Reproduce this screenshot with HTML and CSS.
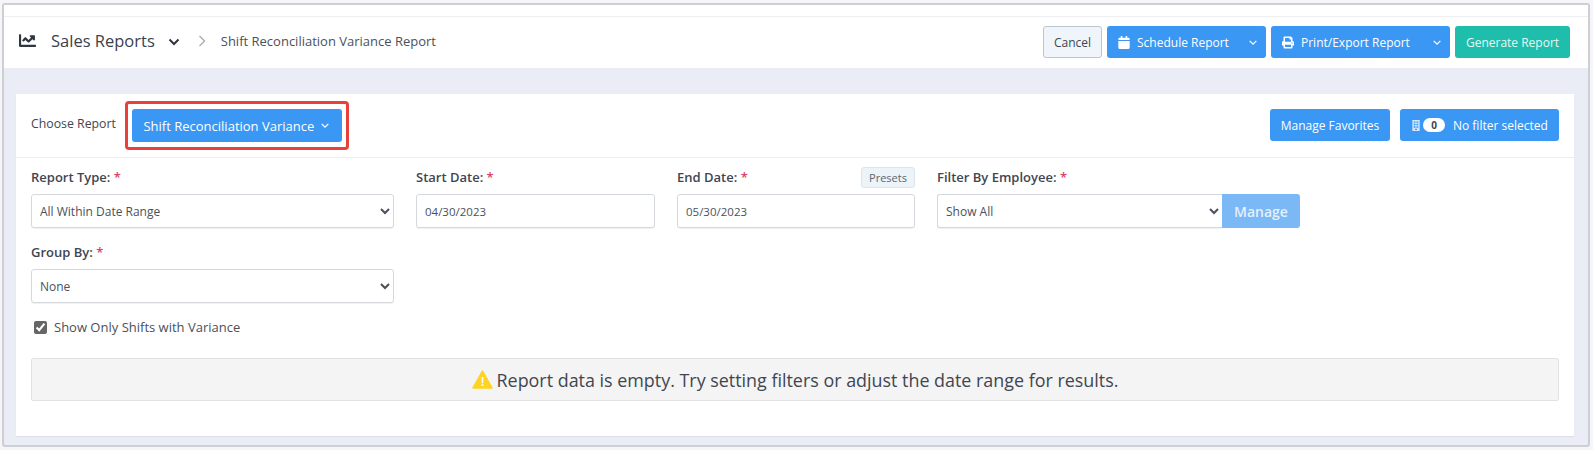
FILE: index.html
```html
<!DOCTYPE html>
<html lang="en">
<head>
<meta charset="utf-8">
<title>Shift Reconciliation Variance Report</title>
<link rel="stylesheet" href="styles.css">
</head>
<body>
<div class="frame">
  <header class="topbar">
    <div class="crumbs">
      <svg class="ico-chart" viewBox="0 0 512 512"><path d="M496 384H64V80c0-8.84-7.16-16-16-16H16C7.16 64 0 71.16 0 80v336c0 17.67 14.33 32 32 32h464c8.84 0 16-7.16 16-16v-32c0-8.84-7.16-16-16-16zM464 96H345.94c-21.38 0-32.09 25.85-16.97 40.97l32.4 32.4L288 242.75l-73.37-73.37c-12.5-12.5-32.76-12.5-45.25 0l-68.69 68.69c-6.25 6.25-6.25 16.38 0 22.63l22.62 22.62c6.25 6.25 16.38 6.25 22.63 0L192 237.25l73.37 73.37c12.5 12.5 32.76 12.5 45.25 0l96-96 32.4 32.4c15.12 15.12 40.97 4.41 40.97-16.97V112c.01-8.84-7.15-16-15.99-16z"/></svg>
      <span class="title">Sales Reports</span>
      <svg class="ico-down" viewBox="0 0 12 8"><path d="M1.5 1.5 6 6l4.5-4.5"/></svg>
      <svg class="ico-sep" viewBox="0 0 8 12"><path d="M1.5 1 6.5 6l-5 5"/></svg>
      <span class="crumb">Shift Reconciliation Variance Report</span>
    </div>
    <div class="actions">
      <button class="btn btn-light">Cancel</button>
      <button class="btn btn-blue btn-split">
        <span class="btn-main">
          <svg class="ico-btn" viewBox="0 0 448 512"><path d="M12 192h424c6.6 0 12 5.4 12 12v260c0 26.5-21.5 48-48 48H48c-26.5 0-48-21.5-48-48V204c0-6.6 5.4-12 12-12zm436-44v-36c0-26.5-21.5-48-48-48h-48V12c0-6.6-5.4-12-12-12h-40c-6.6 0-12 5.4-12 12v52H160V12c0-6.6-5.4-12-12-12h-40c-6.6 0-12 5.4-12 12v52H48C21.5 64 0 85.5 0 112v36c0 6.6 5.4 12 12 12h424c6.6 0 12-5.4 12-12z"/></svg>
          Schedule Report
        </span>
        <svg class="ico-caret" viewBox="0 0 12 8"><path d="M2 2l4 4 4-4"/></svg>
      </button>
      <button class="btn btn-blue btn-split">
        <span class="btn-main">
          <svg class="ico-btn" viewBox="0 0 512 512"><path d="M448 192V77.25c0-8.49-3.37-16.62-9.37-22.63L393.37 9.37c-6-6-14.14-9.37-22.63-9.37H96C78.33 0 64 14.33 64 32v160c-35.35 0-64 28.65-64 64v112c0 8.84 7.16 16 16 16h48v96c0 17.67 14.33 32 32 32h320c17.67 0 32-14.33 32-32v-96h48c8.84 0 16-7.16 16-16V256c0-35.35-28.65-64-64-64zm-64 256H128v-96h256v96zm0-224H128V64h192v48c0 8.84 7.16 16 16 16h48v96zm48 72c-13.25 0-24-10.75-24-24 0-13.26 10.75-24 24-24s24 10.74 24 24c0 13.25-10.75 24-24 24z"/></svg>
          Print/Export Report
        </span>
        <svg class="ico-caret" viewBox="0 0 12 8"><path d="M2 2l4 4 4-4"/></svg>
      </button>
      <button class="btn btn-teal">Generate Report</button>
    </div>
  </header>

  <main class="content">
    <section class="card">
      <div class="card-head">
        <div class="chooser">
          <span class="choose-label">Choose Report</span>
          <div class="highlight">
            <button class="btn btn-blue btn-report">Shift Reconciliation Variance
              <svg class="ico-caret" viewBox="0 0 12 8"><path d="M2 2l4 4 4-4"/></svg>
            </button>
          </div>
        </div>
        <div class="head-actions">
          <button class="btn btn-blue btn-fav">Manage Favorites</button>
          <button class="btn btn-blue btn-filter">
            <svg class="ico-building" viewBox="0 0 8 12"><path fill-rule="evenodd" d="M0 0h8v12H0zM1.500 1.500v1.500h2V1.500zm3 0v1.500h2V1.500zm-3 2.700v1.500h2V4.200zm3 0v1.500h2V4.200zm-3 2.700v1.500h2V6.900zm3 0v1.500h2V6.900zM3 9.500V11h2V9.500z"/></svg>
            <span class="pill">0</span>
            <span class="filter-text">No filter selected</span>
          </button>
        </div>
      </div>

      <div class="card-body">
        <div class="form-grid">
          <div class="field">
            <div class="label-row"><label class="lbl">Report Type: <em>*</em></label></div>
            <select class="control"><option>All Within Date Range</option></select>
          </div>
          <div class="field">
            <div class="label-row"><label class="lbl">Start Date: <em>*</em></label></div>
            <input class="control" type="text" value="04/30/2023">
          </div>
          <div class="field">
            <div class="label-row"><label class="lbl">End Date: <em>*</em></label><button class="presets">Presets</button></div>
            <input class="control" type="text" value="05/30/2023">
          </div>
          <div class="field">
            <div class="label-row"><label class="lbl">Filter By Employee: <em>*</em></label></div>
            <div class="group">
              <select class="control control-joined"><option>Show All</option></select>
              <button class="manage">Manage</button>
            </div>
          </div>
          <div class="field">
            <div class="label-row"><label class="lbl">Group By: <em>*</em></label></div>
            <select class="control"><option>None</option></select>
          </div>
        </div>

        <label class="check"><input type="checkbox" checked> Show Only Shifts with Variance</label>

        <div class="notice">
          <svg class="ico-warn" viewBox="0 0 20 18"><path class="warn-bg" d="M10 1 19 17H1z"/><path class="warn-mark" d="M9.100 6.500h1.800l-.3 6h-1.200zM9.100 13.500h1.800v1.700H9.100z"/></svg>
          <span>Report data is empty. Try setting filters or adjust the date range for results.</span>
        </div>
      </div>
    </section>
  </main>
</div>
</body>
</html>
```
FILE: styles.css
```css
* { box-sizing: border-box; }
html, body { margin: 0; height: 100%; }
body {
  background: #f6f6fa;
  font-family: "Open Sans", "Noto Sans", sans-serif;
  color: #3f4651;
  padding: 3px 3px 3px 2px;
  overflow: hidden;
}
.frame {
  height: 444px;
  border: 2px solid #cdcfd3;
  border-radius: 3px;
  background: #eaedf6;
  display: flex;
  flex-direction: column;
  overflow: hidden;
}
.topbar {
  height: 63px;
  background: #fff;
  border-top: 11px solid #fff;
  display: flex;
  justify-content: space-between;
  align-items: center;
  padding: 0 18px 0 15px;
  position: relative;
}
.topbar::before {
  content: "";
  position: absolute;
  left: 0;
  right: 0;
  top: 0;
  height: 1px;
  background: #eceef1;
}
.crumbs { display: flex; align-items: center; margin-bottom: 3px; }
.ico-chart { width: 17px; height: 17px; fill: #2f3640; margin-right: 15px; }
.title { font-size: 16.500px; color: #3a424d; line-height: 22px; }
.ico-down { width: 12px; height: 8px; margin-left: 13px; fill: none; stroke: #2f3640; stroke-width: 2; margin-top: 3px; }
.ico-sep { width: 8px; height: 12px; margin-left: 18px; fill: none; stroke: #a9adb3; stroke-width: 1.400; }
.crumb { font-size: 13px; margin-left: 15px; color: #4a515b; }
.actions { display: flex; gap: 5px; }

.btn {
  border: 0;
  border-radius: 3px;
  font-family: inherit;
  font-size: 12px;
  height: 32px;
  padding: 0;
  color: #fff;
  display: inline-flex;
  align-items: center;
  justify-content: center;
  white-space: nowrap;
}
.btn-blue { background: #3a97f3; }
.btn-teal { background: #1fbdab; width: 115px; color: #e6f8f5; }
.btn-light { background: #eff5fa; color: #3f4651; width: 59px; border: 1px solid #bcc6d0; }
.btn-split { justify-content: space-between; padding: 0 8px 0 11px; }
.btn-split:nth-child(2) { width: 159px; }
.btn-split:nth-child(3) { width: 179px; }
.btn-main { display: inline-flex; align-items: center; gap: 7px; }
.ico-btn { width: 12px; height: 13px; fill: #fff; }
.ico-caret { width: 10px; height: 7px; fill: none; stroke: #fff; stroke-width: 1.500; }

.content { flex: 1; padding: 26px 14px 9px 12px; }
.card {
  height: 342px;
  background: #fff;
  box-shadow: 0 1px 1px #dde0e8;
}
.card-head {
  height: 64px;
  border-bottom: 1px solid #eceef1;
  display: flex;
  justify-content: space-between;
  padding: 15px 15px 0 15px;
}
.chooser { display: flex; align-items: flex-start; }
.choose-label { font-size: 12.300px; line-height: 30px; color: #3f4651; }
.highlight {
  margin: -8px 0 0 9px;
  border: 3px solid #e8403a;
  border-radius: 4px;
  background: #fff;
  padding: 5px 4px 0;
  height: 49px;
}
.btn-report { font-size: 13px; width: 210px; height: 33px; gap: 6px; }
.head-actions { display: flex; gap: 10px; }
.btn-fav { width: 120px; height: 32px; }
.btn-filter { width: 159px; height: 32px; justify-content: flex-start; padding-left: 12px; }
.ico-building { width: 8px; height: 11px; fill: #d3e6fb; }
.pill {
  background: #fff;
  color: #3f4651;
  font-weight: 700;
  font-size: 10px;
  line-height: 14px;
  width: 22px;
  height: 14px;
  border-radius: 7px;
  margin-left: 3px;
  text-align: center;
}
.filter-text { margin-left: 8px; }

.card-body { padding: 0 15px; }
.form-grid {
  display: grid;
  grid-template-columns: 363px 239px 238px 363px;
  column-gap: 22px;
  row-gap: 13px;
  padding-top: 8px;
}
.label-row {
  height: 28px;
  padding-bottom: 6px;
  display: flex;
  justify-content: space-between;
  align-items: center;
}
.lbl { font-size: 13px; font-weight: 600; color: #3f4651; }
.lbl em { font-style: normal; color: #d9436a; }
.presets {
  height: 21px;
  width: 54px;
  padding: 0;
  background: #ecf3f9;
  border: 1px solid #dde5ec;
  border-radius: 3px;
  font-family: inherit;
  font-size: 11px;
  color: #5c6670;
}
.control {
  display: block;
  width: 100%;
  height: 34px;
  border: 1px solid #d5d8dc;
  border-radius: 3px;
  background: #fff;
  font-family: inherit;
  font-size: 11.500px;
  color: #4a515b;
  padding: 0 6px 0 8px;
  box-shadow: 0 1px 1px #eef0f2;
  outline: 0;
}
select.control { padding-left: 4px; font-size: 12px; }
.group { display: flex; }
.control-joined { width: 285px; border-right: 0; border-radius: 3px 0 0 3px; }
.manage {
  width: 78px;
  height: 34px;
  border: 0;
  border-radius: 0 3px 3px 0;
  background: #7ab8f6;
  color: #e4f0fc;
  font-family: inherit;
  font-size: 14px;
  font-weight: 600;
  padding: 0;
}
.check {
  display: flex;
  align-items: center;
  gap: 7px;
  height: 20px;
  margin-top: 14px;
  padding-left: 3px;
  font-size: 13px;
  color: #4a515b;
}
.check input { margin: 0; width: 13px; height: 13px; accent-color: #666; }
.notice {
  width: 1528px;
  margin-top: 21px;
  height: 43px;
  background: #f4f4f4;
  border: 1px solid #e1e2e4;
  border-radius: 2px;
  display: flex;
  align-items: center;
  justify-content: center;
  gap: 4px;
  font-size: 17.900px;
  color: #3f4651;
}
.ico-warn { width: 21px; height: 19px; }
.warn-bg { fill: #fdd324; stroke: #fdd324; stroke-linejoin: round; stroke-width: 1.500; }
.warn-mark { fill: #fff; }
```
